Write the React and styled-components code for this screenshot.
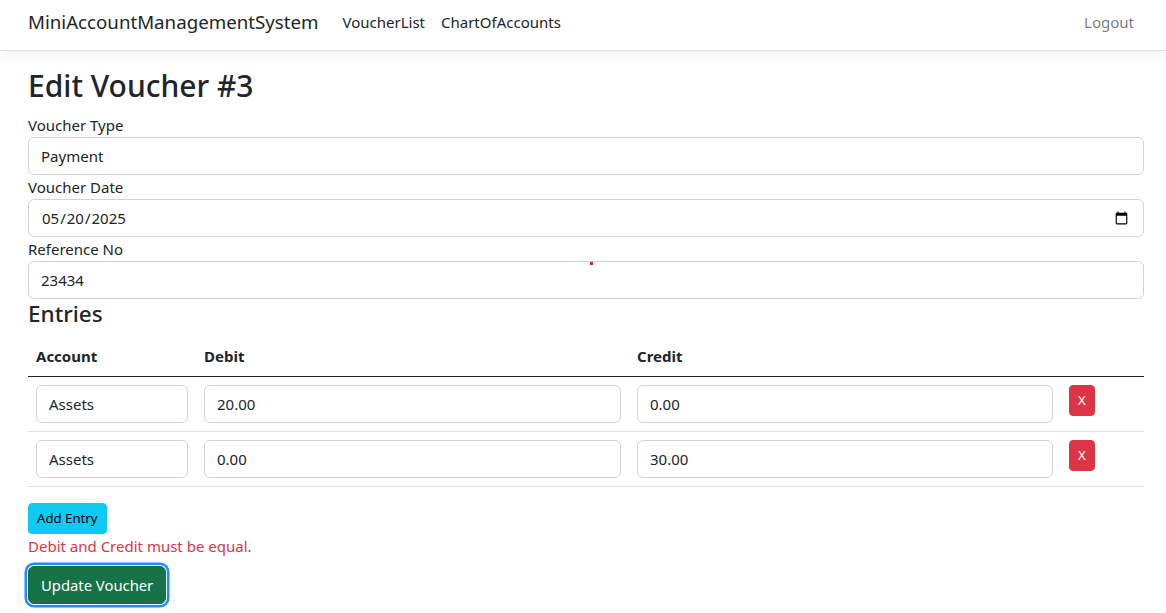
import React from 'react'
import styled, { createGlobalStyle } from 'styled-components'

const Global = createGlobalStyle`
  body {
    margin: 0;
    background: #fff;
    color: #212529;
    font-family: "Noto Sans", "Open Sans", sans-serif;
    font-size: 15px;
    line-height: 1.5;
  }
  * { box-sizing: border-box; }
`

const entries = [
  { account: 'Assets', debit: '20.00', credit: '0.00' },
  { account: 'Assets', debit: '0.00', credit: '30.00' },
]

const App = () => {
  return (
    <Page>
      <Global />
      <Navbar>
        <Brand>MiniAccountManagementSystem</Brand>
        <NavLink>VoucherList</NavLink>
        <NavLink>ChartOfAccounts</NavLink>
        <NavLink $muted $push>Logout</NavLink>
      </Navbar>
      <Main>
        <Title>Edit Voucher #3</Title>
        <Label>Voucher Type</Label>
        <Input defaultValue='Payment' />
        <Label>Voucher Date</Label>
        <Input type='date' defaultValue='2025-05-20' />
        <Label>Reference No</Label>
        <Input defaultValue='23434' />
        <SubTitle>Entries</SubTitle>
        <Table>
          <colgroup>
            <col style={{ width: 168 }} />
            <col style={{ width: 433 }} />
            <col style={{ width: 432 }} />
            <col />
          </colgroup>
          <thead>
            <tr>
              <th>Account</th>
              <th>Debit</th>
              <th>Credit</th>
              <th></th>
            </tr>
          </thead>
          <tbody>
            {entries.map((e, i) => (
              <tr key={i}>
                <td><Input defaultValue={e.account} /></td>
                <td><Input defaultValue={e.debit} /></td>
                <td><Input defaultValue={e.credit} /></td>
                <td><SmallButton $variant='danger'>X</SmallButton></td>
              </tr>
            ))}
          </tbody>
        </Table>
        <SmallButton $variant='info'>Add Entry</SmallButton>
        <ErrorText>Debit and Credit must be equal.</ErrorText>
        <SubmitButton>Update Voucher</SubmitButton>
      </Main>
      <CursorDot />
    </Page>
  )
}

const Page = styled.div`
  position: relative;
  min-height: 613px;
`

const Navbar = styled.nav`
  height: 51px;
  display: flex;
  align-items: center;
  padding: 0 32px 6px 28px;
  border-bottom: 1px solid #e2e3ea;
  box-shadow: 0 4px 12px rgba(0, 0, 0, .05);
  margin-bottom: 16px;
`

const Brand = styled.a`
  font-size: 18.7px;
  color: #212529;
  margin-right: 16px;
  white-space: nowrap;
`

const NavLink = styled.a`
  padding: 0 8px;
  font-size: 15px;
  color: ${p => p.$muted ? 'rgba(0, 0, 0, .55)' : '#212529'};
  margin-left: ${p => p.$push ? 'auto' : '0'};
  margin-right: ${p => p.$push ? '-8px' : '0'};
`

const Main = styled.main`
  padding: 0 22px 0 28px;
`

const Title = styled.h2`
  margin: 0 0 8px;
  font-size: 30px;
  font-weight: 500;
  line-height: 38px;
`

const SubTitle = styled.h4`
  margin: 0 0 8px;
  font-size: 22.5px;
  font-weight: 500;
  line-height: 29px;
`

const Label = styled.label`
  display: block;
  font-size: 15px;
  line-height: 24px;
`

const Input = styled.input`
  display: block;
  width: 100%;
  height: 38px;
  padding: 6px 12px;
  font-family: inherit;
  font-size: 15px;
  line-height: 24px;
  color: #212529;
  background: #fff;
  border: 1px solid #ced4da;
  border-radius: 6px;
  outline: none;
`

const Table = styled.table`
  width: 100%;
  table-layout: fixed;
  border-collapse: collapse;
  margin-bottom: 16px;

  th {
    text-align: left;
    font-weight: 700;
    padding: 8px;
    line-height: 24px;
    border-bottom: 1px solid #212529;
  }

  td {
    padding: 8px;
    vertical-align: top;
    border-bottom: 1px solid #dee2e6;
  }
`

const SmallButton = styled.button`
  display: inline-block;
  padding: 4px 8px;
  font-family: inherit;
  font-size: 13.2px;
  line-height: 21px;
  border-radius: 4px;
  border: 1px solid ${p => p.$variant === 'danger' ? '#dc3545' : '#0dcaf0'};
  background: ${p => p.$variant === 'danger' ? '#dc3545' : '#0dcaf0'};
  color: ${p => p.$variant === 'danger' ? '#fff' : '#000'};
`

const ErrorText = styled.div`
  color: #dc3545;
  line-height: 24px;
  margin-bottom: 8px;
`

const SubmitButton = styled.button`
  display: inline-block;
  padding: 6px 12px;
  font-family: inherit;
  font-size: 14.8px;
  line-height: 24px;
  color: #fff;
  background: #157347;
  border: 1px solid #146c43;
  border-radius: 6px;
  box-shadow: 0 0 0 1px #fff, 0 0 0 3.5px #1e8bff;
`

const CursorDot = styled.span`
  position: absolute;
  left: 590px;
  top: 262px;
  width: 3px;
  height: 3px;
  background: #ee1c25;
`

export default App
